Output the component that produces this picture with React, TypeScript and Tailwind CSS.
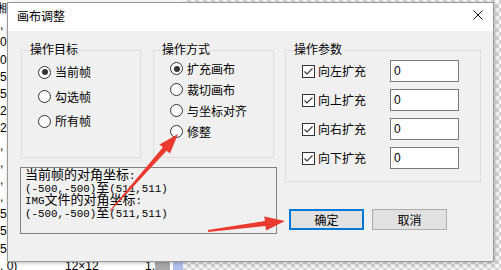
import React from "react"

const listRows = ["湘南", ", 12", "0, 0", "0, 0", "5, 5", "5, 5", "2, 2", "2, 2", ", 0)", ", 0)", ", 0)", ", 0)", "5, 5", "5, 5", "5, 5"]

const Radio = ({ checked }: { checked?: boolean }) => (
  <span className="flex h-[13px] w-[13px] shrink-0 items-center justify-center rounded-full border border-[#333] bg-white">
    {checked && <span className="h-[6px] w-[6px] rounded-full bg-[#333]" />}
  </span>
)

const Check = () => (
  <span className="flex h-[13px] w-[13px] shrink-0 items-center justify-center border border-[#333] bg-white">
    <svg width="11" height="11" viewBox="0 0 11 11">
      <polyline points="1.5,5.5 4,8 9.5,2.5" fill="none" stroke="#333" strokeWidth="1.1" />
    </svg>
  </span>
)

const GroupBox = ({ title, className, children }: { title: string; className: string; children: React.ReactNode }) => (
  <div className={"border border-[#dcdcdc] " + className}>
    <div className="-mt-[10px] ml-[7px] w-fit bg-[#f0f0f0] px-px leading-[16px]">{title}</div>
    {children}
  </div>
)

const Dialog = () => {
  const targets = [
    { label: "当前帧", checked: true },
    { label: "勾选帧" },
    { label: "所有帧" },
  ]
  const modes = [
    { label: "扩充画布", checked: true },
    { label: "裁切画布" },
    { label: "与坐标对齐" },
    { label: "修整" },
  ]
  const params = ["向左扩充", "向上扩充", "向右扩充", "向下扩充"]

  return (
    <div className="absolute left-[7px] top-[2px] flex h-[260px] w-[487px] flex-col border border-[#9a9a9a] bg-[#f0f0f0] font-['Noto_Sans_CJK_SC',sans-serif] text-[12px] text-black shadow-[1px_1px_4px_rgba(0,0,0,0.25)]">
      <div className="flex h-[28px] items-start justify-between bg-white pl-[9px] pr-[10px]">
        <span className="mt-[5px] leading-[16px]">画布调整</span>
        <svg className="mt-[7px]" width="10" height="10" viewBox="0 0 10 10">
          <path d="M0.5 0.5 L9.5 9.5 M9.5 0.5 L0.5 9.5" stroke="#111" strokeWidth="1" />
        </svg>
      </div>

      <div className="flex flex-1 pl-[12px] pt-[19px]">
        <div className="flex w-[257px] flex-col">
          <div className="flex gap-[12px] pl-px">
            <GroupBox title="操作目标" className="h-[108px] w-[120px]">
              <div className="mt-[3px] flex flex-col pl-[16px]">
                {targets.map((t) => (
                  <div key={t.label} className="flex h-[24.5px] items-center gap-[4px]">
                    <Radio checked={t.checked} />
                    <span>{t.label}</span>
                  </div>
                ))}
              </div>
            </GroupBox>
            <GroupBox title="操作方式" className="h-[108px] w-[121px]">
              <div className="mt-px flex flex-col pl-[16px]">
                {modes.map((m) => (
                  <div key={m.label} className="flex h-[21px] items-center gap-[4px]">
                    <Radio checked={m.checked} />
                    <span>{m.label}</span>
                  </div>
                ))}
              </div>
            </GroupBox>
          </div>

          <div className="mt-[9px] h-[67px] w-[257px] border border-[#828282] pl-[4px] pt-[2px] font-['Liberation_Mono','Noto_Sans_CJK_SC',monospace] text-[10.8px]">
            <div className="h-[12.7px] whitespace-nowrap leading-[12.7px]">
              <span className="text-[13px]">当前帧的对角坐标</span>:
            </div>
            <div className="h-[12.7px] whitespace-nowrap leading-[12.7px]">
              (-500,-500)<span className="text-[13px]">至</span>(511,511)
            </div>
            <div className="h-[12.7px] whitespace-nowrap leading-[12.7px]">
              IMG<span className="text-[13px]">文件的对角坐标</span>:
            </div>
            <div className="h-[12.7px] whitespace-nowrap leading-[12.7px]">
              (-500,-500)<span className="text-[13px]">至</span>(511,511)
            </div>
          </div>
        </div>

        <div className="ml-[8px] flex flex-col">
          <GroupBox title="操作参数" className="h-[132px] w-[196px]">
            <div className="mt-[3px] flex flex-col gap-[7px] pl-[16px]">
              {params.map((p) => (
                <div key={p} className="flex h-[22px] items-center">
                  <div className="flex w-[88px] items-center gap-[3px]">
                    <Check />
                    <span>{p}</span>
                  </div>
                  <div className="flex h-[22px] w-[69px] items-center border border-[#7a7a7a] bg-white pl-[3px] font-['Liberation_Sans',sans-serif]">
                    0
                  </div>
                </div>
              ))}
            </div>
          </GroupBox>
          <div className="mt-[27px] flex gap-[8px] pl-[4px]">
            <button className="flex h-[21px] w-[75px] items-center justify-center border-2 border-[#0078d7] bg-[#e1e1e1]">确定</button>
            <button className="flex h-[21px] w-[75px] items-center justify-center border border-[#adadad] bg-[#e1e1e1]">取消</button>
          </div>
        </div>
      </div>
    </div>
  )
}

const Arrows = () => (
  <svg className="pointer-events-none absolute left-0 top-0" width="501" height="270" viewBox="0 0 501 270">
    <polygon
      points="110.4,211.3 166.6,150.7 170,153.6 178,134 159.5,144.4 162.9,147.3 109.6,210.7"
      fill="#eb3b30"
    />
    <polygon
      points="208.1,232 265.5,226.1 266.1,230.5 285,221 264.3,216.6 264.9,221.1 207.9,230"
      fill="#eb3b30"
    />
  </svg>
)

export default function App() {
  return (
    <div className="relative h-[270px] w-[501px] overflow-hidden bg-white font-['Liberation_Sans',sans-serif] text-[12px] text-black">
      <div className="flex h-full">
        <div className="flex w-[183px] flex-col">
          {listRows.map((r, i) => (
            <div key={i} className={"h-[17.2px] whitespace-nowrap leading-[17.2px] " + (i === 0 ? "-ml-[5px]" : "")}>
              {r}
            </div>
          ))}
          <div className="flex h-[17.2px] items-stretch whitespace-nowrap leading-[17.2px]">
            <span className="w-[65px]">, 0)</span>
            <span className="w-[80px]">12×12</span>
            <span className="w-[10px]">1.</span>
            <span className="w-[15px] bg-[#a9a9a9]" />
            <span className="w-[3px] bg-white" />
            <span className="w-[10px] bg-[#b3c0ee]" />
          </div>
        </div>
        <div className="flex-1 bg-[conic-gradient(#d4d4d4_25%,#f7f7f7_0_50%,#d4d4d4_0_75%,#f7f7f7_0)] bg-[length:8px_8px]" />
      </div>
      <Dialog />
      <Arrows />
    </div>
  )
}
